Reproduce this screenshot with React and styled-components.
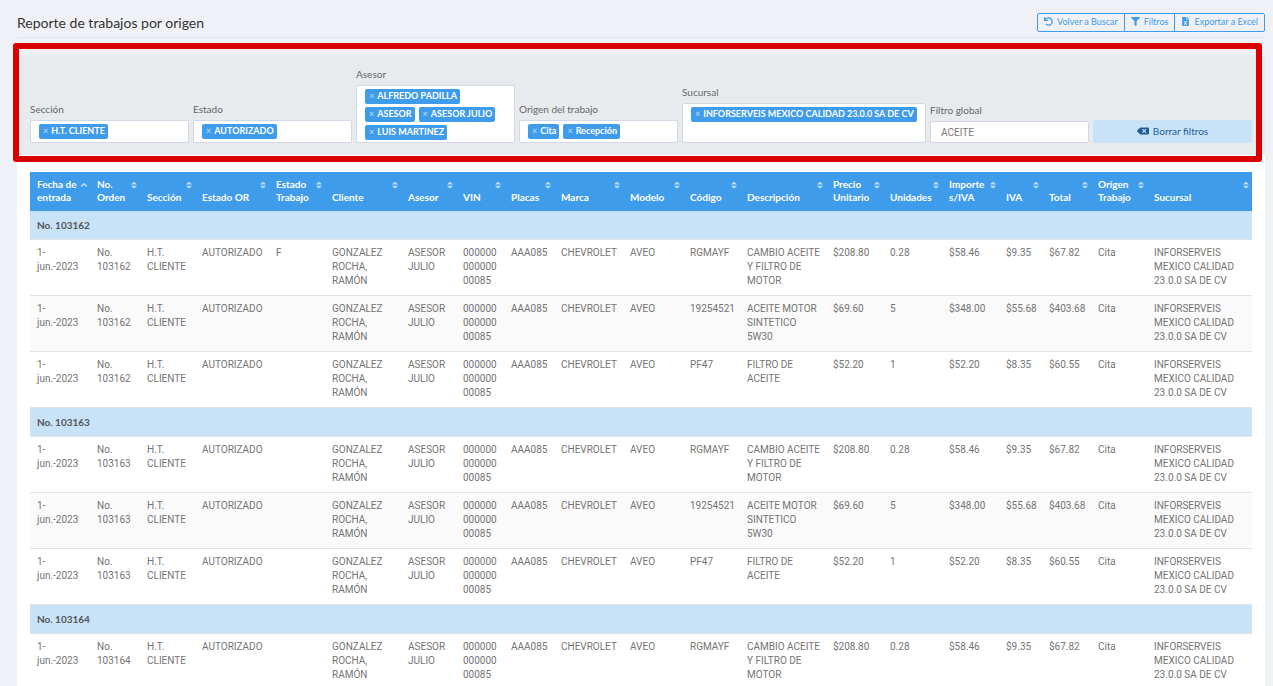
import React, { useId } from 'react';
import styled, { createGlobalStyle } from 'styled-components';
import { FaBackspace, FaFileExcel, FaFilter, FaUndo } from 'react-icons/fa';

const filters = [
  { label: 'Sección', tags: ['H.T. CLIENTE'] },
  { label: 'Estado', tags: ['AUTORIZADO'] },
  { label: 'Asesor', tags: ['ALFREDO PADILLA', 'ASESOR', 'ASESOR JULIO', 'LUIS MARTINEZ'] },
  { label: 'Origen del trabajo', tags: ['Cita', 'Recepción'] },
  { label: 'Sucursal', tags: ['INFORSERVEIS MEXICO CALIDAD 23.0.0 SA DE CV'] },
];

const columns = [
  { title: 'Fecha de entrada', width: 60, sorted: true },
  { title: 'No. Orden', width: 50 },
  { title: 'Sección', width: 55 },
  { title: 'Estado OR', width: 74 },
  { title: 'Estado Trabajo', width: 56 },
  { title: 'Cliente', width: 76 },
  { title: 'Asesor', width: 55 },
  { title: 'VIN', width: 48 },
  { title: 'Placas', width: 50 },
  { title: 'Marca', width: 69 },
  { title: 'Modelo', width: 60 },
  { title: 'Código', width: 57 },
  { title: 'Descripción', width: 86 },
  { title: 'Precio Unitario', width: 57 },
  { title: 'Unidades', width: 59 },
  { title: 'Importe s/IVA', width: 57 },
  { title: 'IVA', width: 43 },
  { title: 'Total', width: 49 },
  { title: 'Origen Trabajo', width: 56 },
  { title: 'Sucursal', width: 105 },
];

const parts = [
  ['RGMAYF', 'CAMBIO ACEITE Y FILTRO DE MOTOR', '$208.80', '0.28', '$58.46', '$9.35', '$67.82'],
  ['19254521', 'ACEITE MOTOR SINTETICO 5W30', '$69.60', '5', '$348.00', '$55.68', '$403.68'],
  ['PF47', 'FILTRO DE ACEITE', '$52.20', '1', '$52.20', '$8.35', '$60.55'],
];

const orders = [
  { number: '103162', status: ['F', '', ''] },
  { number: '103163', status: ['', '', ''] },
  { number: '103164', status: [''] },
];

const buildRow = (order, status, part) => [
  '1-jun.-2023',
  `No. ${order.number}`,
  'H.T. CLIENTE',
  'AUTORIZADO',
  status,
  'GONZALEZ ROCHA, RAMÓN',
  'ASESOR JULIO',
  '000000 000000 00085',
  'AAA085',
  'CHEVROLET',
  'AVEO',
  ...part,
  'Cita',
  'INFORSERVEIS MEXICO CALIDAD 23.0.0 SA DE CV',
];

const SortIcon = ({ sorted }) => (
  <SortMark viewBox="0 0 8 8" aria-hidden="true">
    {sorted ? (
      <path d="M1.2 5.4 4 2.8 6.8 5.4" fill="none" stroke="currentColor" strokeWidth="1.6" />
    ) : (
      <path d="M1 3.4 3.2 1h1.6L7 3.4zM1 4.8h6L4.8 7.2H3.2z" fill="currentColor" />
    )}
  </SortMark>
);

const TagFilter = ({ label, tags }) => {
  const id = useId();
  return (
    <Field>
      <Label htmlFor={id}>{label}</Label>
      <TagBox>
        {tags.map((tag) => (
          <Tag key={tag}>
            <TagRemove type="button" aria-label={`Quitar ${tag}`}>×</TagRemove>
            {tag}
          </Tag>
        ))}
        <TagSearch id={id} type="text" />
      </TagBox>
    </Field>
  );
};

const App = () => {
  return (
    <Page>
      <GlobalStyle />
      <Header>
        <Title>Reporte de trabajos por origen</Title>
        <ButtonGroup>
          <ToolButton type="button"><FaUndo />Volver a Buscar</ToolButton>
          <ToolButton type="button"><FaFilter />Filtros</ToolButton>
          <ToolButton type="button"><FaFileExcel />Exportar a Excel</ToolButton>
        </ButtonGroup>
      </Header>
      <Panel>
        <Filters>
          {filters.map((filter) => (
            <TagFilter key={filter.label} {...filter} />
          ))}
          <Field>
            <Label htmlFor="global">Filtro global</Label>
            <TextInput id="global" type="text" defaultValue="ACEITE" />
          </Field>
          <ClearButton type="button"><FaBackspace />Borrar filtros</ClearButton>
          <Highlight />
        </Filters>
        <TableArea>
          <Table>
            <colgroup>
              {columns.map((column, i) => (
                <col key={i} style={{ width: column.width }} />
              ))}
            </colgroup>
            <thead>
              <tr>
                {columns.map((column, i) => (
                  <HeadCell key={i} scope="col">
                    <HeadContent>
                      <span>{column.title}</span>
                      <SortIcon sorted={column.sorted} />
                    </HeadContent>
                  </HeadCell>
                ))}
              </tr>
            </thead>
            {orders.map((order) => (
              <Group key={order.number}>
                <tr>
                  <GroupCell colSpan={columns.length} scope="rowgroup">No. {order.number}</GroupCell>
                </tr>
                {order.status.map((status, index) => (
                  <Row key={index} $striped={index === 1}>
                    {buildRow(order, status, parts[index]).map((value, i) => (
                      <Cell key={i}>{value}</Cell>
                    ))}
                  </Row>
                ))}
              </Group>
            ))}
          </Table>
        </TableArea>
      </Panel>
    </Page>
  );
};

const GlobalStyle = createGlobalStyle`
  * {
    box-sizing: border-box;
  }

  html {
    scrollbar-width: none;
  }

  body {
    margin: 0;
    background: #f0f1f6;
    color: #747474;
    font-family: Lato, sans-serif;
    font-size: 10px;
    line-height: 14px;
  }

  button, input {
    font: inherit;
  }
`;

const Page = styled.div`
  padding: 0 8px 0 17px;
`;

const Header = styled.header`
  display: flex;
  align-items: center;
  justify-content: space-between;
  padding: 13px 0 5px;
  border-bottom: 1px solid #e2e4ec;
`;

const Title = styled.h1`
  margin: 0;
  color: #333;
  font-size: 14px;
  font-weight: 400;
  line-height: 19px;
`;

const ButtonGroup = styled.div`
  display: flex;
`;

const ToolButton = styled.button`
  display: flex;
  align-items: center;
  gap: 4px;
  height: 19px;
  padding: 0 6px 2px;
  border: 1px solid #3f9cea;
  background: transparent;
  color: #3f9cea;
  font-size: 9px;
  cursor: pointer;

  & + & {
    margin-left: -1px;
  }

  &:first-child {
    border-radius: 2px 0 0 2px;
  }

  &:last-child {
    border-radius: 0 2px 2px 0;
  }
`;

const Panel = styled.main`
  margin-top: 17px;
  background: #fff;
`;

const Filters = styled.section`
  position: relative;
  display: grid;
  grid-template-columns: repeat(4, minmax(0, 159fr)) minmax(0, 244fr) repeat(2, minmax(0, 159fr));
  align-items: end;
  gap: 4px;
  padding: 12px 13px;
  background: #e8ebee;
`;

const Highlight = styled.div`
  position: absolute;
  inset: -12px 3px -7px -4px;
  border: 6px solid #db0000;
  border-radius: 3px;
  pointer-events: none;
`;

const Field = styled.div`
  display: flex;
  flex-direction: column;
  gap: 4px;
`;

const Label = styled.label`
  color: #666;
`;

const TagBox = styled.div`
  display: flex;
  flex-wrap: wrap;
  gap: 3px 4px;
  min-height: 23px;
  padding: 3px 8px 2px;
  border: 1px solid #d3d8e4;
  border-radius: 2px;
  background: #fff;
`;

const Tag = styled.span`
  display: flex;
  align-items: center;
  gap: 3px;
  height: 15px;
  padding: 0 3px 1px 4px;
  border-radius: 2px;
  background: #3f9cea;
  color: #fff;
  font-size: 9px;
  font-weight: 700;
  white-space: nowrap;
`;

const TagRemove = styled.button`
  padding: 0;
  border: 0;
  background: transparent;
  color: #a9d2f6;
  cursor: pointer;
`;

const TagSearch = styled.input`
  width: 12px;
  height: 15px;
  padding: 0;
  border: 0;
  outline: 0;
  background: transparent;
`;

const TextInput = styled.input`
  width: 100%;
  height: 22px;
  padding: 0 10px;
  border: 1px solid #d3d8e4;
  border-radius: 2px;
  background: #fff;
  color: #777;
  font-family: Roboto, sans-serif;
`;

const ClearButton = styled.button`
  display: flex;
  align-items: center;
  justify-content: center;
  gap: 4px;
  height: 23px;
  padding: 0 6px 2px;
  border: 0;
  border-radius: 2px;
  background: #c8e2f8;
  color: #1f5f96;
  cursor: pointer;

  svg {
    width: 12px;
    height: 12px;
  }
`;

const TableArea = styled.section`
  padding: 17px 13px 0;
`;

const Table = styled.table`
  width: 100%;
  table-layout: fixed;
  border-spacing: 0;
`;

const HeadCell = styled.th`
  padding: 6px 2px 7px 7px;
  background: #3f9cea;
  color: #fff;
  font-weight: 700;
  line-height: 13px;
  text-align: left;
  vertical-align: bottom;
`;

const HeadContent = styled.div`
  display: flex;
  align-items: flex-end;
  justify-content: space-between;
  height: 26px;
`;

const SortMark = styled.svg`
  flex: none;
  align-self: flex-start;
  width: 8px;
  height: 8px;
  margin-top: 3px;
  color: #b5d9f8;
`;

const Group = styled.tbody`
  & + & th {
    border-top: 1px solid #dfe3ec;
  }
`;

const GroupCell = styled.th`
  padding: 7px;
  background: #c8e2f8;
  color: #555;
  font-weight: 700;
  text-align: left;
`;

const Row = styled.tr`
  background: ${({ $striped }) => ($striped ? '#fafafa' : '#fff')};
`;

const Cell = styled.td`
  height: 56px;
  padding: 6px 4px 7px 7px;
  border-top: 1px solid #dfe3ec;
  font-family: Roboto, sans-serif;
  vertical-align: top;
`;

export default App;
